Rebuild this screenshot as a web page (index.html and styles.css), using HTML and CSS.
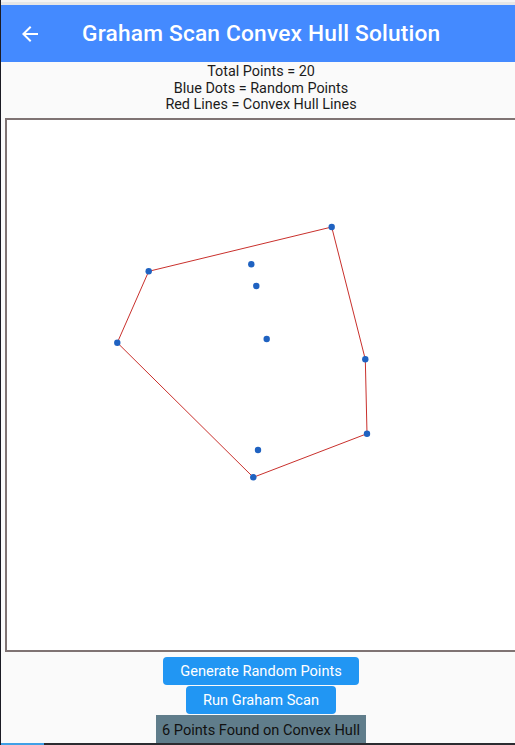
FILE: index.html
```html
<!DOCTYPE html>
<html lang="en">
<head>
<meta charset="utf-8">
<title>Graham Scan Convex Hull Solution</title>
<link rel="stylesheet" href="styles.css">
</head>
<body>
<div class="frame">
  <div class="status-strip"></div>

  <header class="appbar">
    <svg class="back" width="24" height="24" viewBox="0 0 24 24">
      <path d="M20 11H7.83l5.59-5.59L12 4l-8 8 8 8 1.41-1.41L7.83 13H20v-2z" fill="#fff"/>
    </svg>
    <h1 class="title">Graham Scan Convex Hull Solution</h1>
  </header>

  <div class="legend">
    <div>Total Points = 20</div>
    <div>Blue Dots = Random Points</div>
    <div>Red Lines = Convex Hull Lines</div>
  </div>

  <div class="canvas">
    <svg width="511" height="530" viewBox="7 120 511 530">
      <!-- hull -->
      <polygon points="331.7,227 148.7,271.3 117.3,342.7 253.3,477.3 367,433.7 365.3,359.3"
        fill="none" stroke="#c9302c" stroke-width="1"/>
      <!-- points -->
      <g fill="#1f62c1">
        <circle cx="331.7" cy="227" r="3.2"/>
        <circle cx="148.7" cy="271.3" r="3.2"/>
        <circle cx="117.3" cy="342.7" r="3.2"/>
        <circle cx="253.3" cy="477.3" r="3.2"/>
        <circle cx="367" cy="433.7" r="3.2"/>
        <circle cx="365.3" cy="359.3" r="3.2"/>
        <circle cx="251.3" cy="264.3" r="3.2"/>
        <circle cx="256.3" cy="286" r="3.2"/>
        <circle cx="266.7" cy="339" r="3.2"/>
        <circle cx="258" cy="450" r="3.2"/>
      </g>
    </svg>
  </div>

  <div class="controls">
    <button class="btn">Generate Random Points</button>
    <button class="btn">Run Graham Scan</button>
    <div class="result">6 Points Found on Convex Hull</div>
  </div>

  <div class="bottom-line"><span></span></div>
</div>
</body>
</html>
```

FILE: styles.css
```css
* {
  box-sizing: border-box;
}

html, body {
  overflow: hidden;
}

body {
  margin: 0;
  background: #fafafa;
  font-family: Roboto, "Noto Sans", sans-serif;
}

/* the app is a little wider than the window, so its centre sits at 261 */
.frame {
  width: 521px;
  height: 745px;
  display: flex;
  flex-direction: column;
  overflow: hidden;
  border-left: 1px solid #1b1b24;
  position: relative;
}

.status-strip {
  height: 5px;
  flex: none;
  background: #e6e6e6;
  border-top: 2px solid #f4f4f4;
}

.appbar {
  height: 57px;
  flex: none;
  background: #448aff;
  display: flex;
  align-items: center;
}

.back {
  margin-left: 17px;
  flex: none;
}

.title {
  margin: 0 0 0 40px;
  color: #fff;
  font-size: 22.7px;
  font-weight: 500;
  letter-spacing: 0.2px;
  white-space: nowrap;
}

.legend {
  height: 56px;
  flex: none;
  padding-top: 2px;
  text-align: center;
  font-size: 14.4px;
  line-height: 16.5px;
  color: #1c1c1c;
}

.canvas {
  flex: none;
  margin-left: 4px;
  width: 515px;
  height: 534px;
  border: 2px solid #7f7373;
  background: #fff;
}

.canvas svg {
  display: block;
}

.controls {
  flex: 1;
  display: flex;
  flex-direction: column;
  align-items: center;
  padding-top: 5px;
}

.btn {
  font-family: inherit;
  font-size: 14.6px;
  color: #fff;
  background: #2196f3;
  border: none;
  border-radius: 4px;
  height: 28px;
  padding: 0 17px;
  margin-bottom: 1px;
}

.result {
  background: #607d8b;
  color: #111;
  font-size: 14.6px;
  height: 30px;
  padding: 6px 6px 0;
}

.bottom-line {
  position: absolute;
  left: 0;
  right: 0;
  bottom: 0;
  height: 2px;
  background: #2b2b30;
}

.bottom-line span {
  display: block;
  width: 43px;
  height: 2px;
  background: #3fa0e6;
}
```
